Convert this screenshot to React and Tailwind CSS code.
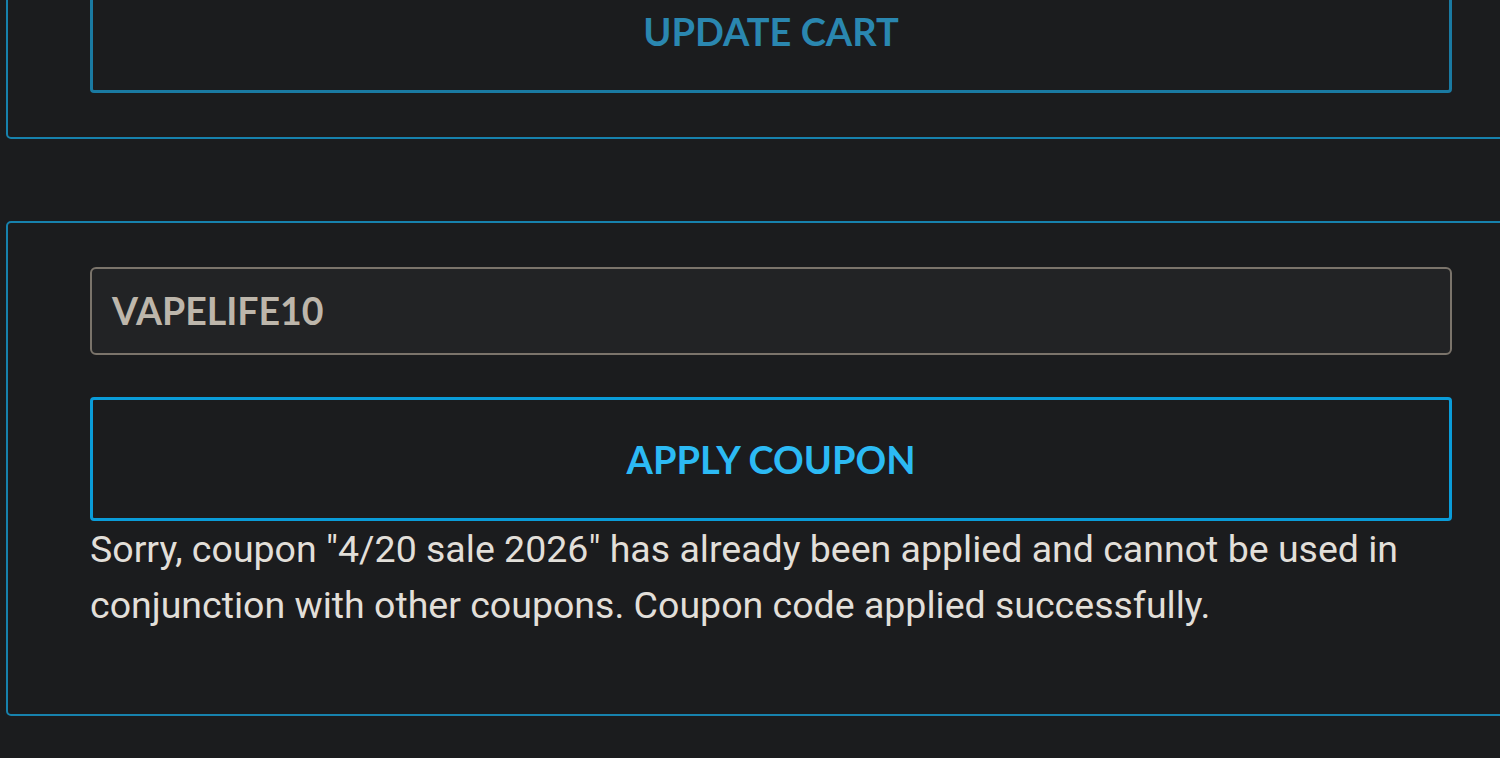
export default function App() {
  return (
    <div className="w-[1500px] h-[758px] overflow-hidden bg-[#1b1c1e]">
      <div className="pl-[6px] w-[1600px]">
        {/* Top card (only bottom part visible) */}
        <div className="mt-[-80px] w-[1530px] border-2 border-[#1782ad] rounded-[5px] px-[82px] pt-[47px] pb-[44px]">
          <button className="w-[1362px] h-[124px] border-[3px] border-[#1a7aa2] rounded-[4px] flex items-center justify-center">
            <span
              className="text-[#2a87b0] font-bold text-[38px]"
              style={{ fontFamily: "Lato, 'Open Sans', sans-serif" }}
            >
              UPDATE CART
            </span>
          </button>
        </div>

        {/* Coupon card */}
        <div className="mt-[82px] w-[1530px] border-2 border-[#1782ad] rounded-[5px] px-[82px] pt-[44px] pb-[81px]">
          <div className="w-[1362px] h-[88px] border-2 border-[#7b746b] rounded-[6px] bg-[#222325] flex items-center px-[20px]">
            <span
              className="text-[#bdb6ab] font-bold text-[37.5px]"
              style={{ fontFamily: "Lato, 'Open Sans', sans-serif" }}
            >
              VAPELIFE10
            </span>
          </div>
          <button className="mt-[42px] w-[1362px] h-[124px] border-[3px] border-[#0a9cd9] rounded-[4px] flex items-center justify-center">
            <span
              className="text-[#2cbaf4] font-bold text-[38px]"
              style={{ fontFamily: "Lato, 'Open Sans', sans-serif" }}
            >
              APPLY COUPON
            </span>
          </button>
          <p
            className="text-[#e2dfd9] text-[37.5px] leading-[56px] w-[1362px]"
            style={{ fontFamily: "Roboto, 'Liberation Sans', sans-serif" }}
          >
            Sorry, coupon "4/20 sale 2026" has already been applied and cannot be used in conjunction with other coupons. Coupon code applied successfully.
          </p>
        </div>
      </div>
    </div>
  );
}
